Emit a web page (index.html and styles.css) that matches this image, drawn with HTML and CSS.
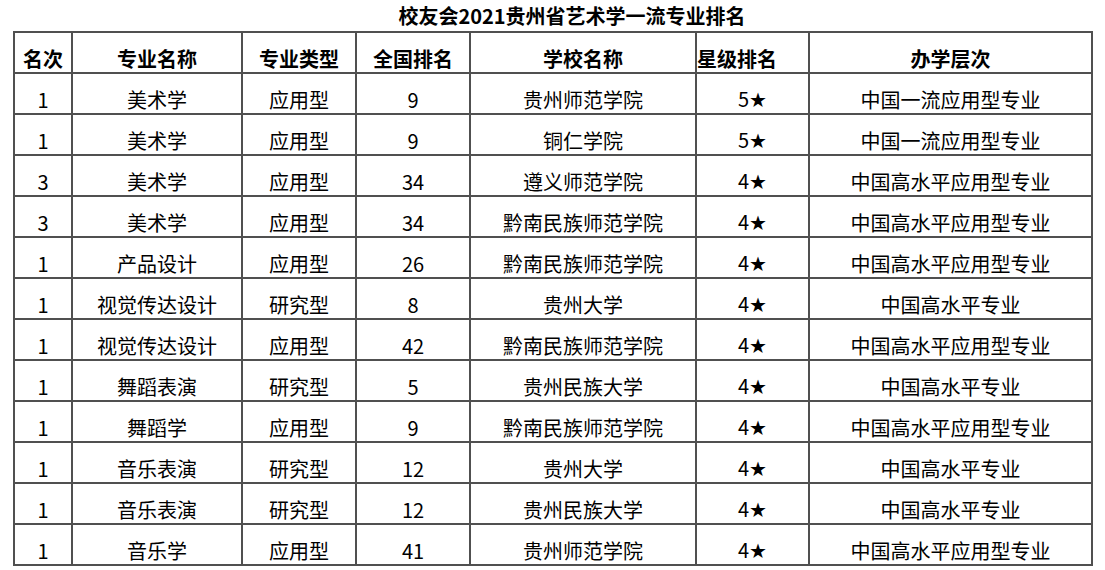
FILE: index.html
```html
<!DOCTYPE html>
<html lang="zh">
<head>
<meta charset="utf-8">
<title>校友会2021贵州省艺术学一流专业排名</title>
<link rel="stylesheet" href="styles.css">
</head>
<body>
<div class="sheet">
  <div class="title">校友会2021贵州省艺术学一流专业排名</div>
  <table class="rank">
    <colgroup>
      <col class="c1"><col class="c2"><col class="c3"><col class="c4"><col class="c5"><col class="c6"><col class="c7">
    </colgroup>
    <thead>
      <tr><th>名次</th><th>专业名称</th><th>专业类型</th><th>全国排名</th><th>学校名称</th><th class="left">星级排名</th><th>办学层次</th></tr>
    </thead>
    <tbody>
      <tr><td>1</td><td>美术学</td><td>应用型</td><td>9</td><td>贵州师范学院</td><td>5<span class="star">★</span></td><td>中国一流应用型专业</td></tr>
      <tr><td>1</td><td>美术学</td><td>应用型</td><td>9</td><td>铜仁学院</td><td>5<span class="star">★</span></td><td>中国一流应用型专业</td></tr>
      <tr><td>3</td><td>美术学</td><td>应用型</td><td>34</td><td>遵义师范学院</td><td>4<span class="star">★</span></td><td>中国高水平应用型专业</td></tr>
      <tr><td>3</td><td>美术学</td><td>应用型</td><td>34</td><td>黔南民族师范学院</td><td>4<span class="star">★</span></td><td>中国高水平应用型专业</td></tr>
      <tr><td>1</td><td>产品设计</td><td>应用型</td><td>26</td><td>黔南民族师范学院</td><td>4<span class="star">★</span></td><td>中国高水平应用型专业</td></tr>
      <tr><td>1</td><td>视觉传达设计</td><td>研究型</td><td>8</td><td>贵州大学</td><td>4<span class="star">★</span></td><td>中国高水平专业</td></tr>
      <tr><td>1</td><td>视觉传达设计</td><td>应用型</td><td>42</td><td>黔南民族师范学院</td><td>4<span class="star">★</span></td><td>中国高水平应用型专业</td></tr>
      <tr><td>1</td><td>舞蹈表演</td><td>研究型</td><td>5</td><td>贵州民族大学</td><td>4<span class="star">★</span></td><td>中国高水平专业</td></tr>
      <tr><td>1</td><td>舞蹈学</td><td>应用型</td><td>9</td><td>黔南民族师范学院</td><td>4<span class="star">★</span></td><td>中国高水平应用型专业</td></tr>
      <tr><td>1</td><td>音乐表演</td><td>研究型</td><td>12</td><td>贵州大学</td><td>4<span class="star">★</span></td><td>中国高水平专业</td></tr>
      <tr><td>1</td><td>音乐表演</td><td>研究型</td><td>12</td><td>贵州民族大学</td><td>4<span class="star">★</span></td><td>中国高水平专业</td></tr>
      <tr><td>1</td><td>音乐学</td><td>应用型</td><td>41</td><td>贵州师范学院</td><td>4<span class="star">★</span></td><td>中国高水平应用型专业</td></tr>
    </tbody>
  </table>
</div>
</body>
</html>
```
FILE: styles.css
```css
html, body {
  margin: 0;
  padding: 0;
  background: #ffffff;
}
body {
  font-family: "Noto Sans CJK SC", "Noto Sans", sans-serif;
  color: #000000;
}
.sheet {
  padding-left: 13px;
  width: 1080px;
}
.title {
  height: 31px;
  line-height: 31px;
  font-size: 20px;
  font-weight: bold;
  text-align: center;
  padding-left: 38px;
  box-sizing: border-box;
}
.rank {
  border-collapse: collapse;
  table-layout: fixed;
  width: 1080px;
  font-size: 20px;
}
.c1 { width: 58px; }
.c2 { width: 170px; }
.c3 { width: 114px; }
.c4 { width: 114px; }
.c5 { width: 226px; }
.c6 { width: 113px; }
.c7 { width: 283px; }
.rank th,
.rank td {
  border: 2px solid #505050;
  height: 41px;
  box-sizing: border-box;
  padding: 0;
  text-align: center;
  vertical-align: bottom;
  line-height: 26px;
  white-space: nowrap;
  overflow: visible;
}
.rank th {
  font-weight: bold;
}
.rank th.left {
  text-align: left;
}
.star {
  font-family: "DejaVu Sans", sans-serif;
  font-size: 20px;
}
```
